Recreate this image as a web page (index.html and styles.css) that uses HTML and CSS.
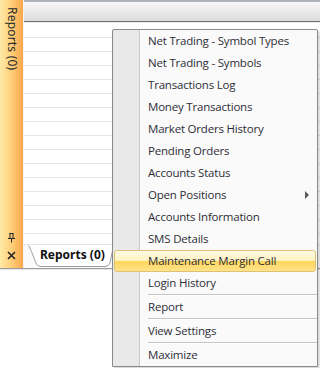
FILE: index.html
```html
<!DOCTYPE html>
<html>
<head>
<meta charset="utf-8">
<link rel="stylesheet" href="styles.css">
</head>
<body>
<div class="app">
  <div class="top">
    <div class="sidebar">
      <div class="side-title">Reports (0)</div>
      <div class="side-icons">
        <svg class="pin" width="9" height="10" viewBox="0 0 9 10"><path d="M2.5 0.5h4M3 0.5v4.5M6 0.5v4.5M1 5.5h7M4.5 5.5v4" stroke="#222" stroke-width="1" fill="none"/></svg>
        <svg class="close" width="9" height="9" viewBox="0 0 9 9"><path d="M1 1l7 7M8 1l-7 7" stroke="#222" stroke-width="1.6" fill="none"/></svg>
      </div>
    </div>
    <div class="panel">
      <div class="header"></div>
      <div class="grid"></div>
      <div class="tabstrip">
        <div class="tab">
          <svg class="tab-shape" width="86" height="22" viewBox="0 0 86 22"><path d="M0.5 0.5 C3 4 6 14 8.5 19 Q10 21.5 13 21.5 H77 Q80.5 21.5 82 18 L85.5 0.5" fill="#fff" stroke="#9c9c9c"/></svg>
          <span class="tab-label">Reports (0)</span>
        </div>
      </div>
    </div>
  </div>
  <div class="bottom"></div>
</div>

<div class="menu">
  <div class="item">Net Trading - Symbol Types</div>
  <div class="item">Net Trading - Symbols</div>
  <div class="item">Transactions Log</div>
  <div class="item">Money Transactions</div>
  <div class="item">Market Orders History</div>
  <div class="item">Pending Orders</div>
  <div class="item">Accounts Status</div>
  <div class="item sub">Open Positions<span class="arrow"></span></div>
  <div class="item">Accounts Information</div>
  <div class="item">SMS Details</div>
  <div class="item hot">Maintenance Margin Call</div>
  <div class="item">Login History</div>
  <div class="sep"></div>
  <div class="item">Report</div>
  <div class="sep"></div>
  <div class="item">View Settings</div>
  <div class="sep"></div>
  <div class="item">Maximize</div>
</div>
</body>
</html>
```

FILE: styles.css
```css
html, body {
  margin: 0;
  padding: 0;
}
body {
  width: 320px;
  height: 368px;
  overflow: hidden;
  position: relative;
  background: #fff;
  font-family: "Open Sans", "Noto Sans", sans-serif;
  font-size: 12px;
}
.app {
  display: flex;
  flex-direction: column;
  height: 368px;
}
.top {
  display: flex;
  height: 268px;
}
.sidebar {
  width: 23px;
  border-right: 1px solid #f4f4f4;
  background: linear-gradient(to right, #ffe9a6 0%, #ffd27e 45%, #fba64a 100%);
  display: flex;
  flex-direction: column;
  justify-content: space-between;
  align-items: center;
}
.side-title {
  writing-mode: vertical-rl;
  margin-top: 7px;
  color: #2a2a2a;
  font-family: "Noto Sans", sans-serif;
  font-size: 12px;
  line-height: 14px;
  letter-spacing: 0.2px;
}
.side-icons {
  display: flex;
  flex-direction: column;
  align-items: center;
  gap: 8px;
  margin-bottom: 8px;
}
.panel {
  flex: 1;
  display: flex;
  flex-direction: column;
}
.header {
  height: 19px;
  border-top: 2px solid #aeb3ba;
  border-bottom: 1px solid #727272;
  background: linear-gradient(#f8f8f8, #dcdcdc);
}
.grid {
  flex: 1;
  background-color: #fff;
  background-image: repeating-linear-gradient(to bottom, transparent 0, transparent 13px, #e6e6e6 13px, #e6e6e6 14px);
  background-position: 0 1px;
  border-top: 1px solid #ececec;
}
.tabstrip {
  height: 23px;
  border-top: 1px solid #e4e4e4;
  background: #fafafa;
  padding-left: 4px;
}
.tab {
  position: relative;
  width: 86px;
  height: 22px;
}
.tab-shape {
  display: block;
}
.tab-label {
  position: absolute;
  left: 12px;
  top: 2px;
  font-weight: bold;
  font-size: 12px;
  line-height: 16px;
  color: #111;
  font-family: "Noto Sans", sans-serif;
}
.bottom {
  flex: 1;
  border-top: 1px solid #9c9c9c;
  box-shadow: inset 0 1px 0 #e6e6e6;
  background: #fff;
}
.menu {
  position: absolute;
  left: 112px;
  top: 29px;
  width: 204px;
  border: 1px solid #8a8a8a;
  border-radius: 2px 2px 0 0;
  background: linear-gradient(to right, #e9e9e9 0, #e9e9e9 26px, #c5c5c5 26px, #c5c5c5 27px, #fff 27px, #fff 28px, #fafafa 28px);
  box-shadow: 2px 2px 2px rgba(0,0,0,0.15);
}
.item {
  position: relative;
  height: 22px;
  line-height: 22px;
  padding-left: 35px;
  color: #2e2e38;
  white-space: nowrap;
  font-size: 11.5px;
  letter-spacing: -0.2px;
}
.item.hot {
  margin: 0 1px;
  height: 20px;
  line-height: 20px;
  padding-left: 33px;
  border: 1px solid #dfc173;
  border-radius: 3px;
  background: linear-gradient(#fffbe6 0%, #fff2bf 48%, #ffd65c 52%, #ffe38b 100%);
}
.arrow {
  position: absolute;
  right: 8px;
  top: 7px;
  width: 0;
  height: 0;
  border-top: 4px solid transparent;
  border-bottom: 4px solid transparent;
  border-left: 4px solid #5a5a5a;
}
.sep {
  height: 0;
  margin: 0 0 0 35px;
  border-top: 1px solid #c5c5c5;
  border-bottom: 1px solid #fff;
}
```
